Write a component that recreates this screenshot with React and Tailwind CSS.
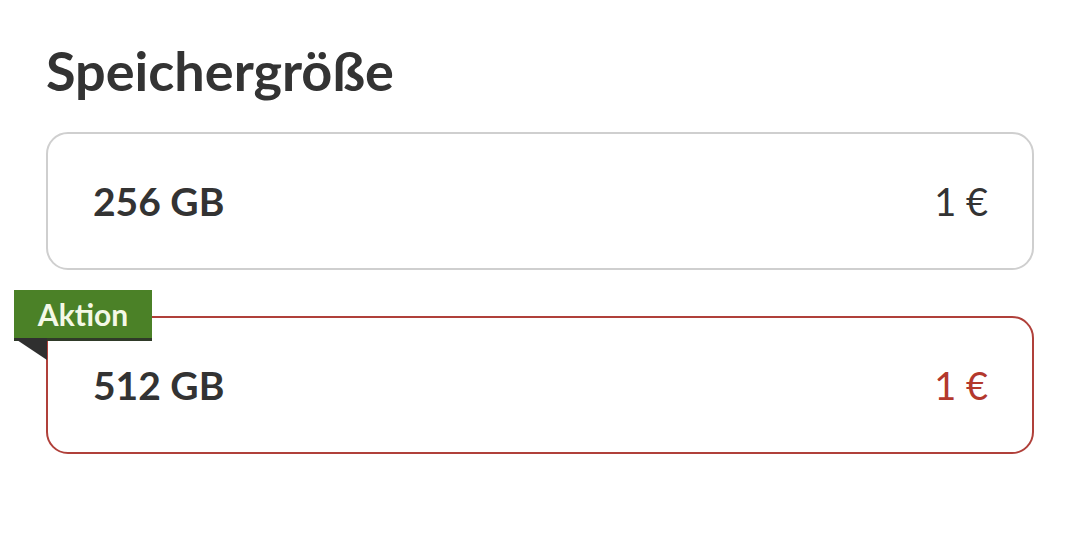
import React from 'react';

const options = [
  { id: '256', label: '256 GB', price: '1 €', promo: false },
  { id: '512', label: '512 GB', price: '1 €', promo: true },
];

function Option({ item }) {
  return (
    <div
      className={
        'relative flex h-[138px] items-center justify-between rounded-[22px] bg-white pl-[45px] pr-[44px] ' +
        (item.promo ? 'border-2 border-[#b0403a]' : 'border-2 border-[#cfcfcf]')
      }
    >
      {item.promo && (
        <div className="absolute left-[-34px] top-[-28px]">
          <div className="flex h-[48px] w-[138px] items-center justify-center bg-[#4b8127] text-[30px] font-bold text-[#f4f8e6] shadow-[0_3px_0_#2f3a28]">
            Aktion
          </div>
          <svg width="33" height="22" viewBox="0 0 33 22" className="block">
            <polygon points="0,0 33,0 33,22" fill="#2f2f2f" />
          </svg>
        </div>
      )}
      <span className="text-[39px] font-bold text-[#333333]">{item.label}</span>
      <span className={'text-[38px] ' + (item.promo ? 'text-[#b3382d]' : 'text-[#333333]')}>
        {item.price}
      </span>
    </div>
  );
}

export default function App() {
  return (
    <div className="min-h-[544px] w-[1080px] bg-white font-['Lato',sans-serif]">
      <div className="px-[46px] pt-[38px]">
        <h2 className="text-[54px] font-bold leading-[66px] text-[#333333]">Speichergröße</h2>
        <div className="mt-[28px] flex flex-col gap-[46px]">
          {options.map((o) => (
            <Option key={o.id} item={o} />
          ))}
        </div>
      </div>
    </div>
  );
}
